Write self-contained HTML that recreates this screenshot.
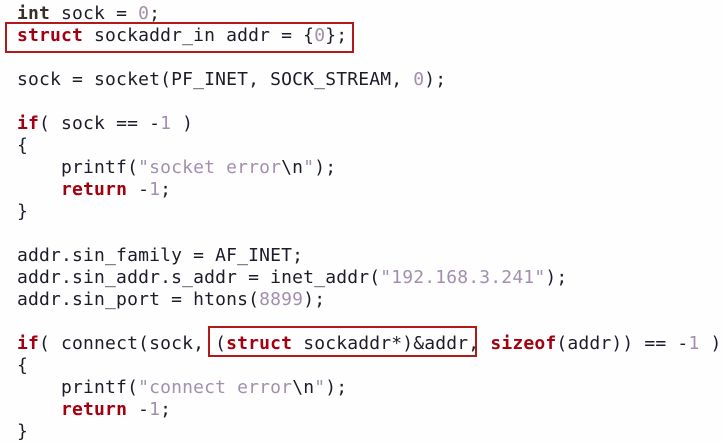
<!DOCTYPE html>
<html><head><style>
body{margin:0;width:722px;height:444px;background:#fefefe;overflow:hidden;position:relative}
pre{position:absolute;left:17px;top:3px;margin:0;font-family:"DejaVu Sans Mono","Liberation Mono",monospace;font-size:18px;letter-spacing:0.17px;line-height:22px;color:#1c1c2a}
.k{color:#a30010;font-weight:bold}
.t{color:#3a302a;font-weight:bold}
.n{color:#a38fae}
.s{color:#a38fae}
.box{position:absolute;border:2px solid #b01a1a;box-sizing:border-box}
</style></head><body>
<pre><span class="t">int</span> sock = <span class="n">0</span>;
<span class="k">struct</span> sockaddr_in addr = {<span class="n">0</span>};

sock = socket(PF_INET, SOCK_STREAM, <span class="n">0</span>);

<span class="k">if</span>( sock == -<span class="n">1</span> )
{
    printf(<span class="s">"socket error</span>\n<span class="s">"</span>);
    <span class="k">return</span> -<span class="n">1</span>;
}

addr.sin_family = AF_INET;
addr.sin_addr.s_addr = inet_addr(<span class="s">"192.168.3.241"</span>);
addr.sin_port = htons(<span class="n">8899</span>);

<span class="k">if</span>( connect(sock, (<span class="k">struct</span> sockaddr*)&amp;addr, <span class="k">sizeof</span>(addr)) == -<span class="n">1</span> )
{
    printf(<span class="s">"connect error</span>\n<span class="s">"</span>);
    <span class="k">return</span> -<span class="n">1</span>;
}</pre>
<div class="box" style="left:5px;top:22px;width:349px;height:31px"></div>
<div class="box" style="left:208px;top:326px;width:269px;height:31px"></div>
</body></html>
